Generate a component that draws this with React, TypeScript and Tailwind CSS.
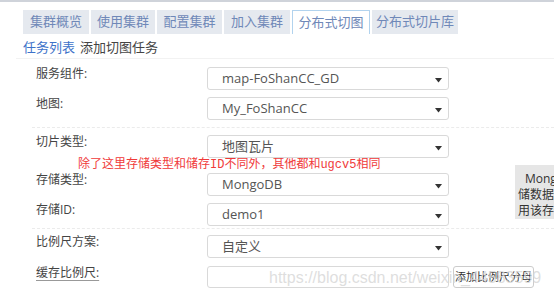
const tabs = [
  { label: "集群概览", w: "w-[66px]" },
  { label: "使用集群", w: "w-[64px]" },
  { label: "配置集群", w: "w-[65px]" },
  { label: "加入集群", w: "w-[66px]" },
  { label: "分布式切图", w: "w-[78px]", active: true },
  { label: "分布式切片库", w: "w-[86px]" },
];

function Caret() {
  return (
    <svg width="7" height="5" viewBox="0 0 7 5" className="absolute right-[6px] top-[10px]">
      <path d="M0 0 L7 0 L3.5 4.5 Z" fill="#333" />
    </svg>
  );
}

function Select({ value }: { value: string }) {
  return (
    <div className="relative w-[242px] h-[23px] border border-[#d9d9d9] rounded-[3px] bg-white pl-[14px] text-[13px] leading-[21px] text-[#555]">
      {value}
      <Caret />
    </div>
  );
}

function Row({ label, value, className = "" }: { label: string; value: string; className?: string }) {
  return (
    <div className={"flex items-start " + className}>
      <div className="w-[175px] pl-[4px] text-[12px] leading-[14px] text-[#444]">{label}</div>
      <Select value={value} />
    </div>
  );
}

function Dashed({ className = "" }: { className?: string }) {
  return <div className={"border-t border-dashed border-[#ebebeb] " + className} />;
}

export default function App() {
  return (
    <div
      className="relative w-[554px] h-[295px] overflow-hidden bg-white"
      style={{ fontFamily: '"Open Sans", "Noto Sans CJK SC", sans-serif' }}
    >
      <div className="h-[2px] bg-[#cfd3da]" />

      {/* tabs */}
      <div className="mt-[8px] pl-[23px] flex gap-[2px]">
        {tabs.map((t) => (
          <div
            key={t.label}
            className={
              t.w +
              " h-[24px] flex items-center justify-center text-[13px] text-[#6f88b8] " +
              (t.active ? "bg-white border border-b-0 border-[#b2d3ee]" : "bg-[#e5e9ef]")
            }
          >
            {t.label}
          </div>
        ))}
      </div>

      {/* sub nav */}
      <div className="mt-[5px] pl-[23px] text-[13px] leading-[16px] flex gap-[5px]">
        <span className="text-[#3d72c9]">任务列表</span>
        <span className="text-[#444]">添加切图任务</span>
      </div>
      <div className="mt-[3px] ml-[16px] h-px bg-[#f2f2f2]" />

      {/* form */}
      <div className="pl-[32px] mt-[8px]">
        <Row label="服务组件:" value="map-FoShanCC_GD" />
        <Row label="地图:" value="My_FoShanCC" className="mt-[7px]" />
        <Dashed className="mt-[7px]" />
        <Row label="切片类型:" value="地图瓦片" className="mt-[7px]" />
        <div
          className="ml-[46px] h-[15px] text-[12px] leading-[15px] text-[#f03a3a]"
          style={{ fontFamily: '"Liberation Mono", "Noto Sans CJK SC", monospace' }}
        >
          除了这里存储类型和储存ID不同外，其他都和ugcv5相同
        </div>
        <Row label="存储类型:" value="MongoDB" />
        <Row label="存储ID:" value="demo1" className="mt-[7px]" />
        <Dashed className="mt-[2px]" />
        <Row label="比例尺方案:" value="自定义" className="mt-[6px]" />
        <div className="flex items-start mt-[8px]">
          <div className="w-[175px] pl-[4px] text-[12px] leading-[14px] text-[#444]">
            <span className="underline decoration-[#999] underline-offset-[3px]">缓存比例尺:</span>
          </div>
          <div className="w-[242px] h-[22px] border border-[#d9d9d9] rounded-[3px] bg-white" />
          <button className="ml-[4px] w-[81px] h-[22px] border border-[#ccc] rounded-[3px] bg-white text-[11px] text-[#333]">
            添加比例尺分母
          </button>
        </div>
      </div>

      {/* tooltip box */}
      <div className="absolute left-[515px] top-[165px] w-[80px] h-[54px] bg-[#e6e6e6] pl-[3px] pt-[6px] text-[12px] leading-[16px] text-[#333] whitespace-nowrap">
        <div className="pl-[7px]">MongoDB</div>
        <div>储数据库</div>
        <div>用该存储</div>
      </div>

      {/* watermark */}
      <div
        className="absolute left-[269px] top-[268px] text-[16px] leading-[20px] text-[#d6d6d6]/80 pointer-events-none whitespace-nowrap"
        style={{ fontFamily: '"Liberation Sans", sans-serif' }}
      >
        https://blog.csdn.net/weixin_44583599
      </div>
    </div>
  );
}
